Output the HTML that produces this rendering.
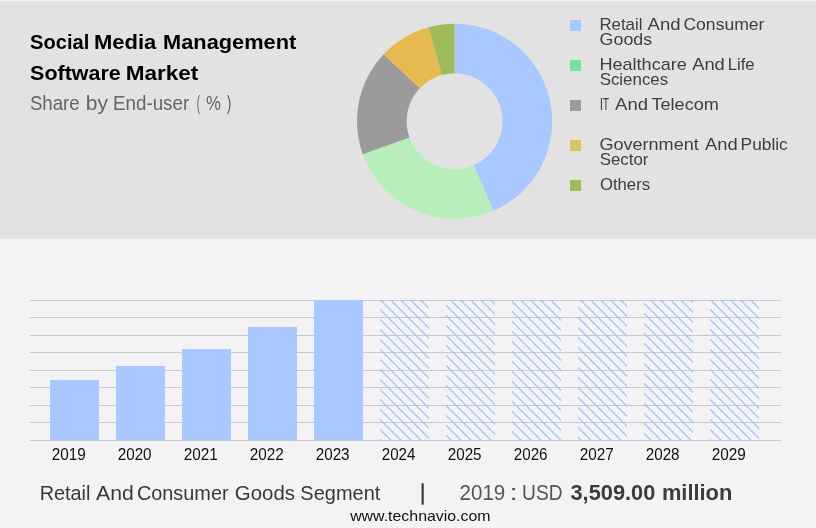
<!DOCTYPE html>
<html><head><meta charset="utf-8"><title>Social Media Management Software Market</title>
<style>
html,body{margin:0;padding:0;background:#f3f3f5;}
body{width:816px;height:528px;overflow:hidden;}
svg{display:block;will-change:transform}
text{font-family:"Liberation Sans",sans-serif;}
</style></head><body>
<svg width="816" height="528" viewBox="0 0 816 528">
<rect x="0" y="0" width="816" height="528" fill="#f3f3f5"/>
<rect x="0" y="1" width="816" height="238" fill="#e2e2e2"/>

<path d="M454.60,23.70 A97.6,97.6 0 0 1 493.36,210.87 L473.66,165.35 A48,48 0 0 0 454.60,73.30 Z" fill="#a8c8ff"/>
<path d="M493.36,210.87 A97.6,97.6 0 0 1 362.77,154.36 L409.44,137.56 A48,48 0 0 0 473.66,165.35 Z" fill="#b8eeb9"/>
<path d="M362.77,154.36 A97.6,97.6 0 0 1 383.69,54.24 L419.72,88.32 A48,48 0 0 0 409.44,137.56 Z" fill="#9b9b9b"/>
<path d="M383.69,54.24 A97.6,97.6 0 0 1 428.52,27.25 L441.77,75.05 A48,48 0 0 0 419.72,88.32 Z" fill="#e5ba50"/>
<path d="M428.52,27.25 A97.6,97.6 0 0 1 454.60,23.70 L454.60,73.30 A48,48 0 0 0 441.77,75.05 Z" fill="#9fbb5c"/>
<rect x="570" y="20" width="11" height="11" fill="#a8c8ff"/>
<rect x="570" y="60" width="11" height="11" fill="#72e396"/>
<rect x="570" y="100" width="11" height="11" fill="#9b9b9b"/>
<rect x="570" y="140" width="11" height="11" fill="#dbc45b"/>
<rect x="570" y="180" width="11" height="11" fill="#9fbb5c"/>
<rect x="30" y="300" width="751" height="1" fill="#c9c9c9"/>
<rect x="30" y="317" width="751" height="1" fill="#c9c9c9"/>
<rect x="30" y="335" width="751" height="1" fill="#c9c9c9"/>
<rect x="30" y="352" width="751" height="1" fill="#c9c9c9"/>
<rect x="30" y="370" width="751" height="1" fill="#c9c9c9"/>
<rect x="30" y="387" width="751" height="1" fill="#c9c9c9"/>
<rect x="30" y="405" width="751" height="1" fill="#c9c9c9"/>
<rect x="30" y="422" width="751" height="1" fill="#c9c9c9"/>
<rect x="30" y="440" width="751" height="1" fill="#c9c9c9"/>
<rect x="50" y="380" width="49" height="60" fill="#a8c8ff"/>
<rect x="116" y="366" width="49" height="74" fill="#a8c8ff"/>
<rect x="182" y="349" width="49" height="91" fill="#a8c8ff"/>
<rect x="248" y="327" width="49" height="113" fill="#a8c8ff"/>
<rect x="314" y="300" width="49" height="140" fill="#a8c8ff"/>
<clipPath id="hc"><rect x="380" y="300" width="49" height="140"/><rect x="446" y="300" width="49" height="140"/><rect x="512" y="300" width="49" height="140"/><rect x="578" y="300" width="49" height="140"/><rect x="644" y="300" width="49" height="140"/><rect x="710" y="300" width="49" height="140"/></clipPath>
<path clip-path="url(#hc)" d="M235.7,295 L385.7,445 M245.7,295 L395.7,445 M255.7,295 L405.7,445 M265.7,295 L415.7,445 M275.7,295 L425.7,445 M285.7,295 L435.7,445 M295.7,295 L445.7,445 M305.7,295 L455.7,445 M315.7,295 L465.7,445 M325.7,295 L475.7,445 M335.7,295 L485.7,445 M345.7,295 L495.7,445 M355.7,295 L505.7,445 M365.7,295 L515.7,445 M375.7,295 L525.7,445 M385.7,295 L535.7,445 M395.7,295 L545.7,445 M405.7,295 L555.7,445 M415.7,295 L565.7,445 M425.7,295 L575.7,445 M435.7,295 L585.7,445 M445.7,295 L595.7,445 M455.7,295 L605.7,445 M465.7,295 L615.7,445 M475.7,295 L625.7,445 M485.7,295 L635.7,445 M495.7,295 L645.7,445 M505.7,295 L655.7,445 M515.7,295 L665.7,445 M525.7,295 L675.7,445 M535.7,295 L685.7,445 M545.7,295 L695.7,445 M555.7,295 L705.7,445 M565.7,295 L715.7,445 M575.7,295 L725.7,445 M585.7,295 L735.7,445 M595.7,295 L745.7,445 M605.7,295 L755.7,445 M615.7,295 L765.7,445 M625.7,295 L775.7,445 M635.7,295 L785.7,445 M645.7,295 L795.7,445 M655.7,295 L805.7,445 M665.7,295 L815.7,445 M675.7,295 L825.7,445 M685.7,295 L835.7,445 M695.7,295 L845.7,445 M705.7,295 L855.7,445 M715.7,295 L865.7,445 M725.7,295 L875.7,445 M735.7,295 L885.7,445 M745.7,295 L895.7,445" stroke="#9fc3ff" stroke-width="1.3" fill="none"/>
<rect x="421.6" y="483.3" width="2.1" height="21.4" fill="#333"/>
<text y="49.4" font-size="20.9" font-weight="bold" fill="#000"><tspan x="30.1" textLength="59.13" lengthAdjust="spacingAndGlyphs">Social</tspan> <tspan x="94.0" textLength="62.33" lengthAdjust="spacingAndGlyphs">Media</tspan> <tspan x="163.05" textLength="133.22" lengthAdjust="spacingAndGlyphs">Management</tspan></text>
<text y="79.9" font-size="20.6" font-weight="bold" fill="#000"><tspan x="30.1" textLength="90.67" lengthAdjust="spacingAndGlyphs">Software</tspan> <tspan x="125.65" textLength="72.71" lengthAdjust="spacingAndGlyphs">Market</tspan></text>
<text y="110.0" font-size="20.2" fill="#646464"><tspan x="29.9" textLength="49.76" lengthAdjust="spacingAndGlyphs">Share</tspan> <tspan x="85.75" textLength="22.19" lengthAdjust="spacingAndGlyphs">by</tspan> <tspan x="113.0" textLength="76.15" lengthAdjust="spacingAndGlyphs">End-user</tspan> <tspan x="196.85" textLength="3.32" lengthAdjust="spacingAndGlyphs">(</tspan> <tspan x="206.0" textLength="14.94" lengthAdjust="spacingAndGlyphs">%</tspan> <tspan x="226.75" textLength="4.57" lengthAdjust="spacingAndGlyphs">)</tspan></text>
<text y="29.8" font-size="16.2" fill="#3e3e3e"><tspan x="599.4" textLength="43.06" lengthAdjust="spacingAndGlyphs">Retail</tspan> <tspan x="647.6" textLength="33.01" lengthAdjust="spacingAndGlyphs">And</tspan> <tspan x="683.4" textLength="81.07" lengthAdjust="spacingAndGlyphs">Consumer</tspan></text>
<text y="45.3" font-size="16.2" fill="#3e3e3e"><tspan x="599.6" textLength="52.55" lengthAdjust="spacingAndGlyphs">Goods</tspan></text>
<text y="69.8" font-size="16.2" fill="#3e3e3e"><tspan x="599.4" textLength="87.41" lengthAdjust="spacingAndGlyphs">Healthcare</tspan> <tspan x="692.15" textLength="32.66" lengthAdjust="spacingAndGlyphs">And</tspan> <tspan x="727.75" textLength="26.82" lengthAdjust="spacingAndGlyphs">Life</tspan></text>
<text y="85.3" font-size="16.2" fill="#3e3e3e"><tspan x="599.65" textLength="68.58" lengthAdjust="spacingAndGlyphs">Sciences</tspan></text>
<text y="109.8" font-size="16.2" fill="#3e3e3e"><tspan x="599.65" textLength="3.43" lengthAdjust="spacingAndGlyphs">I</tspan><tspan x="602.75" textLength="6.19" lengthAdjust="spacingAndGlyphs">T</tspan> <tspan x="615.1" textLength="32.91" lengthAdjust="spacingAndGlyphs">And</tspan> <tspan x="651.4" textLength="67.49" lengthAdjust="spacingAndGlyphs">Telecom</tspan></text>
<text y="149.8" font-size="16.2" fill="#3e3e3e"><tspan x="599.4" textLength="99.37" lengthAdjust="spacingAndGlyphs">Government</tspan> <tspan x="705.1" textLength="32.61" lengthAdjust="spacingAndGlyphs">And</tspan> <tspan x="740.6" textLength="47.19" lengthAdjust="spacingAndGlyphs">Public</tspan></text>
<text y="165.3" font-size="16.2" fill="#3e3e3e"><tspan x="599.65" textLength="48.82" lengthAdjust="spacingAndGlyphs">Sector</tspan></text>
<text y="189.8" font-size="16.2" fill="#3e3e3e"><tspan x="599.9" textLength="50.19" lengthAdjust="spacingAndGlyphs">Others</tspan></text>
<text y="460.1" font-size="16.0" fill="#111"><tspan x="51.75" textLength="34.07" lengthAdjust="spacingAndGlyphs">2019</tspan></text>
<text y="460.1" font-size="16.0" fill="#111"><tspan x="117.75" textLength="33.8" lengthAdjust="spacingAndGlyphs">2020</tspan></text>
<text y="460.1" font-size="16.0" fill="#111"><tspan x="183.75" textLength="34.07" lengthAdjust="spacingAndGlyphs">2021</tspan></text>
<text y="460.1" font-size="16.0" fill="#111"><tspan x="249.75" textLength="34.07" lengthAdjust="spacingAndGlyphs">2022</tspan></text>
<text y="460.1" font-size="16.0" fill="#111"><tspan x="315.75" textLength="33.81" lengthAdjust="spacingAndGlyphs">2023</tspan></text>
<text y="460.1" font-size="16.0" fill="#111"><tspan x="381.75" textLength="33.54" lengthAdjust="spacingAndGlyphs">2024</tspan></text>
<text y="460.1" font-size="16.0" fill="#111"><tspan x="447.75" textLength="33.81" lengthAdjust="spacingAndGlyphs">2025</tspan></text>
<text y="460.1" font-size="16.0" fill="#111"><tspan x="513.75" textLength="33.81" lengthAdjust="spacingAndGlyphs">2026</tspan></text>
<text y="460.1" font-size="16.0" fill="#111"><tspan x="579.75" textLength="34.07" lengthAdjust="spacingAndGlyphs">2027</tspan></text>
<text y="460.1" font-size="16.0" fill="#111"><tspan x="645.75" textLength="33.81" lengthAdjust="spacingAndGlyphs">2028</tspan></text>
<text y="460.1" font-size="16.0" fill="#111"><tspan x="711.75" textLength="34.07" lengthAdjust="spacingAndGlyphs">2029</tspan></text>
<text y="499.85" font-size="19.3" fill="#383838"><tspan x="39.65" textLength="50.77" lengthAdjust="spacingAndGlyphs">Retail</tspan> <tspan x="96.0" textLength="37.71" lengthAdjust="spacingAndGlyphs">And</tspan> <tspan x="136.95" textLength="91.62" lengthAdjust="spacingAndGlyphs">Consumer</tspan> <tspan x="234.85" textLength="60.1" lengthAdjust="spacingAndGlyphs">Goods</tspan> <tspan x="300.35" textLength="80.01" lengthAdjust="spacingAndGlyphs">Segment</tspan></text>
<text y="499.55" font-size="21.4" fill="#555"><tspan x="459.6" textLength="45.69" lengthAdjust="spacingAndGlyphs">2019</tspan> <tspan x="509.4" textLength="8.2" lengthAdjust="spacingAndGlyphs">:</tspan> <tspan x="522.1" textLength="40.5" lengthAdjust="spacingAndGlyphs">USD</tspan></text>
<text y="499.6" font-size="22.3" font-weight="bold" fill="#3c3c3c"><tspan x="570.5" textLength="84.82" lengthAdjust="spacingAndGlyphs">3,509.00</tspan> <tspan x="661.9" textLength="70.45" lengthAdjust="spacingAndGlyphs">million</tspan></text>
<text y="521.15" font-size="15.0" fill="#111"><tspan x="350.15" textLength="140.41" lengthAdjust="spacingAndGlyphs">www.technavio.com</tspan></text>
</svg></body></html>
